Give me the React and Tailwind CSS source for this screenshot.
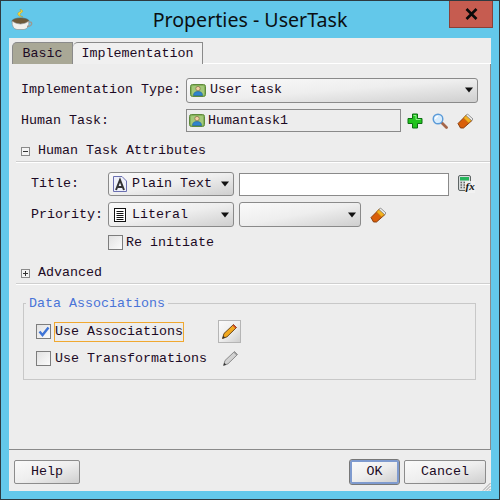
const mono = "font-['Liberation_Mono',monospace] text-[13.33px] leading-none whitespace-nowrap text-[#1c0a24]";
const gloss = "bg-gradient-to-br from-[#fafafa] via-[#eeeeee] to-[#cfcfcf]";

function UserIcon() {
  return (
    <svg width="16" height="13" viewBox="0 0 16 13" className="shrink-0">
      <rect x="0.5" y="0.5" width="15" height="12" rx="2" fill="#86b35a" stroke="#5f8a3c" />
      <rect x="2" y="2" width="12" height="9" rx="1" fill="#a3c97a" />
      <circle cx="8" cy="4.6" r="2.2" fill="#f2cfa6" stroke="#7a5a3a" strokeWidth="0.6" />
      <path d="M3.5 11.5 Q3.5 7.5 8 7.5 Q12.5 7.5 12.5 11.5 Z" fill="#2f84cf" stroke="#1e5f9c" strokeWidth="0.6" />
    </svg>
  );
}

function Arrow() {
  return (
    <svg width="10" height="6" viewBox="0 0 10 6" className="shrink-0">
      <path d="M1 0.5 H9 L5 5.5 Z" fill="#111" />
    </svg>
  );
}

function PlusIcon() {
  return (
    <svg width="16" height="16" viewBox="0 0 16 16">
      <path d="M5.5 1 H10.5 V5.5 H15 V10.5 H10.5 V15 H5.5 V10.5 H1 V5.5 H5.5 Z" fill="#22c41e" stroke="#0b6f10" />
      <path d="M6.5 2.5 H9 V6.5 H13.5" fill="none" stroke="#8ff08a" />
    </svg>
  );
}

function SearchIcon() {
  return (
    <svg width="16" height="16" viewBox="0 0 16 16">
      <path d="M9.5 9.5 L14.5 14.5" stroke="#a5664a" strokeWidth="2.8" strokeLinecap="round" />
      <circle cx="6" cy="6" r="4.8" fill="#d8ecfc" stroke="#5b9bd8" strokeWidth="1.4" />
      <path d="M3.5 6 Q3.5 3.5 6 3.3" fill="none" stroke="#fff" strokeWidth="1.2" />
    </svg>
  );
}

function EraserIcon() {
  return (
    <svg width="17" height="16" viewBox="0 0 17 16">
      <path d="M1 10.5 L9.5 2 L15 7.5 L6.5 15 L3.5 15 Z" fill="#d95f0a" stroke="#7f3506" strokeWidth="0.9" />
      <path d="M6.5 5 L11.5 10 L15 7 L9.5 1.8 Z" fill="#f5b21e" stroke="#a8701a" strokeWidth="0.6" />
      <path d="M10.5 1 L16 6 L14.5 7.5 L9 2.5 Z" fill="#ededed" stroke="#6e6e6e" strokeWidth="0.7" />
    </svg>
  );
}

function CalcIcon() {
  return (
    <svg width="17" height="18" viewBox="0 0 17 18">
      <rect x="0.5" y="0.5" width="12" height="15" rx="1.5" fill="#d8dcdc" stroke="#5d6464" />
      <rect x="2" y="2" width="9" height="3.5" fill="#25b45a" />
      <path d="M2.5 7.5h1.5M5.5 7.5h1.5M2.5 10h1.5M5.5 10h1.5M2.5 12.5h1.5M5.5 12.5h1.5" stroke="#666" strokeWidth="1.4" />
      <rect x="7" y="6" width="10" height="12" fill="#f2f2f2" opacity="0.85" />
      <text x="7.5" y="15" fontFamily="Liberation Serif, serif" fontStyle="italic" fontWeight="700" fontSize="11" fill="#111">fx</text>
    </svg>
  );
}

function PlainTextIcon() {
  return (
    <svg width="14" height="16" viewBox="0 0 14 16" className="shrink-0">
      <path d="M0.5 0.5 H9 L13.5 5 V15.5 H0.5 Z" fill="#eef0fa" stroke="#6a6fb0" />
      <path d="M3 14 L7 4 L11 14 M4.5 11 H9.5" fill="none" stroke="#333" strokeWidth="2" />
    </svg>
  );
}

function LiteralIcon() {
  return (
    <svg width="12" height="14" viewBox="0 0 12 14" className="shrink-0">
      <rect x="0.5" y="0.5" width="11" height="13" fill="#fff" stroke="#111" />
      <path d="M2.5 3.5H9.5M2.5 5.5H9.5M2.5 7.5H9.5M2.5 9.5H9.5M2.5 11.5H9.5" stroke="#111" />
    </svg>
  );
}

function PencilIcon({ gray }) {
  return (
    <svg width="17" height="17" viewBox="0 0 17 17">
      <path d="M1.5 15.5 L3 10.5 L12.5 1.5 L15.5 4.5 L6 13.8 Z" fill={gray ? "#d2d2d2" : "#f2a91f"} stroke={gray ? "#808080" : "#5c3a10"} strokeWidth="0.9" />
      <path d="M11.5 2.5 L14.5 5.5 L15.5 4.5 L12.5 1.5 Z" fill={gray ? "#9a9a9a" : "#d2492a"} />
      <path d="M1.5 15.5 L2.3 12.8 L4.2 14.7 Z" fill="#333" />
    </svg>
  );
}

function Toggle({ open }) {
  return (
    <span className="relative flex h-[9px] w-[9px] shrink-0 items-center justify-center border border-[#8a8a8a] bg-[#f4f4f4]">
      <span className="h-px w-[5px] bg-[#333]" />
      {!open && <span className="absolute h-[5px] w-px bg-[#333]" />}
    </span>
  );
}

function Checkbox({ checked }) {
  return (
    <span className="flex h-[15px] w-[15px] shrink-0 items-center justify-center border border-[#7d7d7d] bg-gradient-to-br from-[#e2e2e2] to-[#fbfbfb]">
      {checked && (
        <svg width="12" height="11" viewBox="0 0 12 11">
          <path d="M1.5 5.5 L4.5 9 L10.5 1.5" fill="none" stroke="#3f74d6" strokeWidth="2.4" />
        </svg>
      )}
    </span>
  );
}

function FooterButton({ label, width, focused }) {
  return (
    <button
      className={`${mono} ${gloss} flex h-[24px] items-center justify-center rounded-[2px] ${width} ${
        focused ? "border-2 border-[#7f9bcf] outline outline-1 outline-[#777]" : "border border-[#8c8c8c]"
      }`}
    >
      {label}
    </button>
  );
}

export default function App() {
  return (
    <div className="flex h-[500px] w-[500px] flex-col border border-[#2d3a40] bg-[#63c8ea]">
      {/* title bar */}
      <div className="relative flex h-[37px] shrink-0 items-center justify-center">
        <svg width="22" height="22" viewBox="0 0 22 22" className="absolute left-[10px] top-[8px]">
          <path d="M9 0 Q14 2 10 4 Q7 6 12 8 Q9 8 7 6 Q6 3 10 2.5 Z" fill="#f7d93a" stroke="#b18c1d" strokeWidth="0.4" />
          <ellipse cx="9.5" cy="12" rx="8.5" ry="3" fill="#6e5a38" stroke="#555" strokeWidth="0.6" />
          <path d="M1 12 Q1 20 6 20.5 H13 Q18 20 18 12 Q14 15 9.5 15 Q5 15 1 12 Z" fill="#f1f1ec" stroke="#8a8a84" strokeWidth="0.6" />
          <path d="M17.5 13 Q21.5 12.5 20.5 15.5 Q19.5 17.5 16 17.5" fill="none" stroke="#9a9a94" strokeWidth="1.4" />
        </svg>
        <span className="font-['Noto_Sans',sans-serif] text-[19.6px] leading-none text-[#0b0f12]">Properties - UserTask</span>
        <div className="absolute right-[6px] top-0 flex h-[27px] w-[44px] items-center justify-center border border-t-0 border-[#8a4038] bg-[#c65c50]">
          <svg width="13" height="12" viewBox="0 0 13 12">
            <path d="M1.5 1 L11.5 11 M11.5 1 L1.5 11" stroke="#0a0a0a" strokeWidth="2.6" />
          </svg>
        </div>
      </div>

      {/* dialog body */}
      <div className="relative mx-[8px] mb-[8px] flex flex-1 flex-col bg-[#ededed]">
        {/* tabs */}
        <div className="flex h-[26px] shrink-0 items-end pl-[3px]">
          <div className={`${mono} flex h-[22px] w-[61px] items-center justify-center rounded-tl-[5px] border border-b-0 border-[#8a8a8a] bg-[#a9a896]`}>Basic</div>
          <div className={`${mono} flex h-[22px] w-[130px] items-center justify-center rounded-tl-[5px] border border-b-0 border-l-0 border-[#8a8a8a] bg-[#f0f0f0]`}>Implementation</div>
          <div className="h-px flex-1 bg-white" />
        </div>

        {/* panel */}
        <div className="flex flex-1 flex-col border-r border-b border-[#8a8a8a]">
          <div className="mt-[12px] flex h-[28px] items-center pl-[12px] pr-[12px]">
            <span className={`${mono} w-[165px]`}>Implementation Type:</span>
            <div className={`${gloss} flex h-[25px] flex-1 items-center gap-[4px] rounded-[3px] border border-[#8a8a8a] pl-[3px] pr-[3px]`}>
              <UserIcon />
              <span className={mono}>User task</span>
              <span className="flex-1" />
              <Arrow />
            </div>
          </div>

          <div className="mt-[5px] flex h-[23px] items-center pl-[12px]">
            <span className={`${mono} w-[165px]`}>Human Task:</span>
            <div className="flex h-[23px] w-[215px] items-center gap-[3px] border border-[#8a8a8a] bg-[#ededed] pl-[2px]">
              <UserIcon />
              <span className={mono}>Humantask1</span>
            </div>
            <div className="ml-[6px] flex items-center gap-[9px]">
              <PlusIcon />
              <SearchIcon />
              <EraserIcon />
            </div>
          </div>

          <div className="mt-[10px] flex h-[18px] items-center gap-[8px] pl-[12px]">
            <Toggle open />
            <span className={mono}>Human Task Attributes</span>
          </div>
          <div className="ml-[7px] mt-[1px] box-content h-px border-b border-white bg-[#cfcfcf]" />

          <div className="mt-[9px] flex h-[24px] items-center pl-[22px]">
            <span className={`${mono} w-[77px]`}>Title:</span>
            <div className={`${gloss} flex h-[24px] w-[126px] items-center rounded-[3px] border border-[#8a8a8a] pl-[4px] pr-[3px]`}>
              <PlainTextIcon />
              <span className={`${mono} ml-[5px] flex-1`}>Plain Text</span>
              <Arrow />
            </div>
            <div className="ml-[5px] h-[23px] w-[210px] border border-[#8a8a8a] bg-white" />
            <span className="ml-[9px]"><CalcIcon /></span>
          </div>

          <div className="mt-[6px] flex h-[25px] items-center pl-[22px]">
            <span className={`${mono} w-[77px]`}>Priority:</span>
            <div className={`${gloss} flex h-[25px] w-[126px] items-center rounded-[3px] border border-[#8a8a8a] pl-[5px] pr-[3px]`}>
              <LiteralIcon />
              <span className={`${mono} ml-[6px] flex-1`}>Literal</span>
              <Arrow />
            </div>
            <div className={`${gloss} ml-[5px] flex h-[25px] w-[122px] items-center justify-end rounded-[3px] border border-[#8a8a8a] pr-[3px]`}>
              <Arrow />
            </div>
            <span className="ml-[9px]"><EraserIcon /></span>
          </div>

          <div className="mt-[8px] flex h-[15px] items-center pl-[99px]">
            <Checkbox />
            <span className={`${mono} ml-[3px]`}>Re initiate</span>
          </div>

          <div className="mt-[14px] flex h-[18px] items-center gap-[8px] pl-[12px]">
            <Toggle />
            <span className={mono}>Advanced</span>
          </div>
          <div className="ml-[7px] mt-[1px] box-content h-px border-b border-white bg-[#cfcfcf]" />

          {/* data associations */}
          <fieldset className="mx-[14px] mt-[12px] h-[83px] border border-[#c8c8c8] pl-[12px] pt-[10px]">
            <legend className="-ml-[10px] px-[3px] font-['Liberation_Mono',monospace] text-[13.33px] leading-none text-[#4a74d8]">Data Associations</legend>
            <div className="flex h-[23px] items-center">
              <Checkbox checked />
              <span className={`${mono} ml-[3px] flex h-[20px] w-[130px] items-center border border-[#f0a830]`}>Use Associations</span>
              <div className={`${gloss} ml-[34px] flex h-[23px] w-[23px] items-center justify-center border border-[#b5b5b5]`}>
                <PencilIcon />
              </div>
            </div>
            <div className="mt-[4px] flex h-[23px] items-center">
              <Checkbox />
              <span className={`${mono} ml-[4px] w-[167px]`}>Use Transformations</span>
              <PencilIcon gray />
            </div>
          </fieldset>
        </div>

        {/* footer */}
        <div className="flex h-[41px] shrink-0 items-center pl-[5px] pr-[5px] pt-[2px]">
          <FooterButton label="Help" width="w-[66px]" />
          <span className="flex-1" />
          <FooterButton label="OK" width="w-[49px]" focused />
          <span className="w-[5px]" />
          <FooterButton label="Cancel" width="w-[82px]" />
        </div>

        {/* resize grip */}
        <svg width="9" height="9" viewBox="0 0 9 9" className="absolute bottom-0 right-0">
          <path d="M8.5 1 L1 8.5 M8.5 4 L4 8.5 M8.5 7 L7 8.5" stroke="#a0a0a0" />
        </svg>
      </div>
    </div>
  );
}
